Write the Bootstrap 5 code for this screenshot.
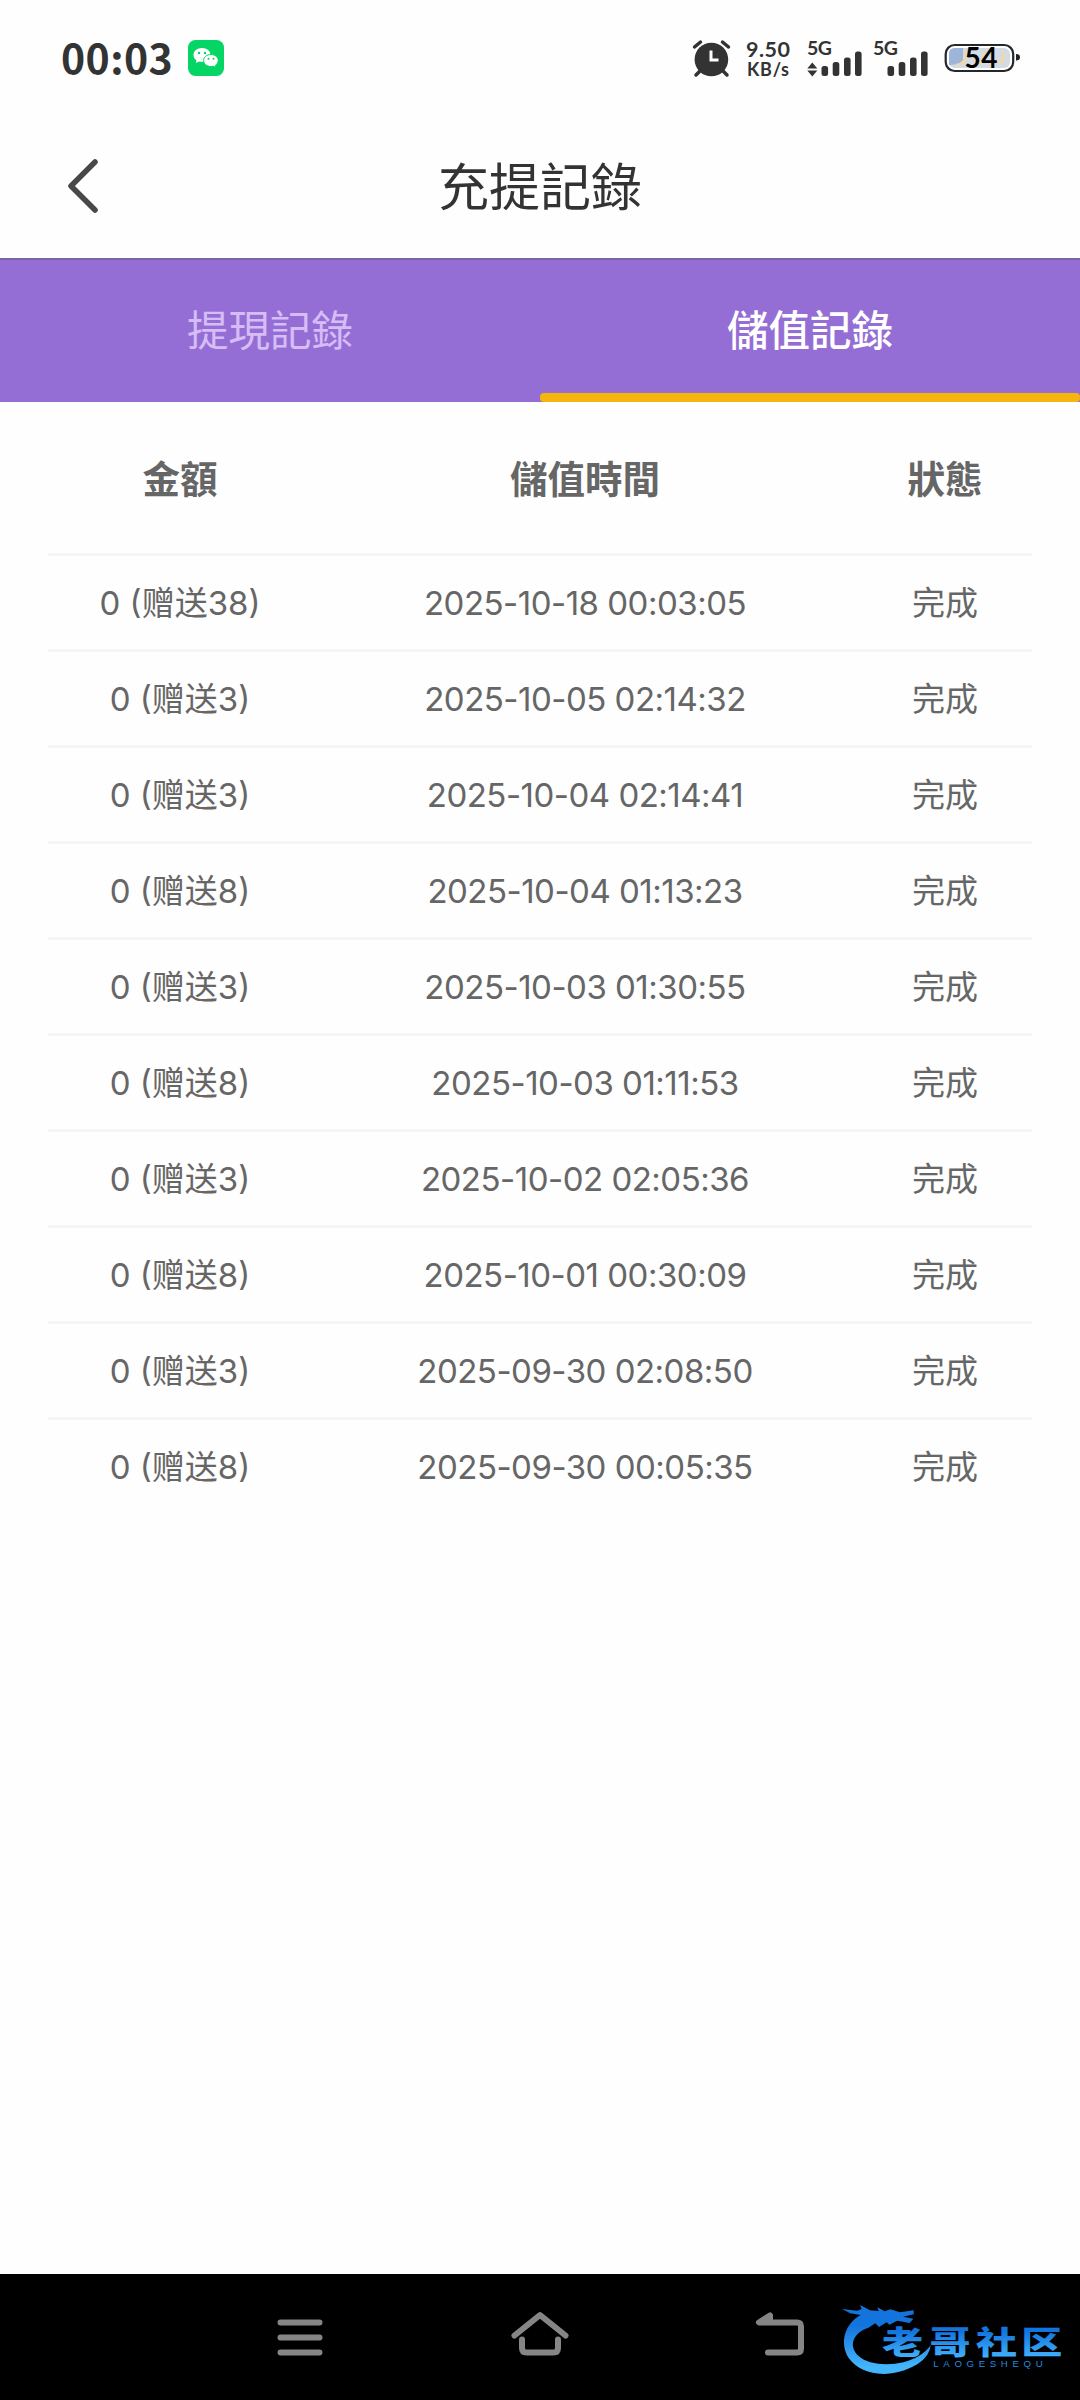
<!DOCTYPE html>
<html lang="zh-Hant">
<head>
  <meta charset="UTF-8" />
  <title>充提記錄</title>
  <meta name="viewport" content="width=device-width, initial-scale=1" />
  <link href="https://cdn.jsdelivr.net/npm/bootstrap@5.3.3/dist/css/bootstrap.min.css" rel="stylesheet" />
  <style>
    body { background:#fefefe; color:#333; height:2400px; overflow:hidden; font-family:Inter, "Noto Sans CJK SC", sans-serif; }
    .status-bar { height:116px; padding:0 60px 0 61px; }
    .clock { font:700 41px/1 "Noto Sans CJK SC", sans-serif; letter-spacing:.4px; width:127px; padding-bottom:4px; }
    .app-bar { height:142px; }
    .app-bar h1 { font:400 51px/1 "Noto Sans CJK TC", sans-serif; color:#333; padding-bottom:6px; }
    .back-btn { width:108px; padding:0 0 2px 64px; }
    .tab-bar { height:144px; background:#956ed5; border-top:2px solid #7b61a8; font-family:"Noto Sans CJK TC", sans-serif; }
    .tab-bar .nav-link { height:142px; padding:0 0 6px; border-radius:0; font-size:41.5px; color:#d6bdf5; }
    .tab-bar .nav-link.active { color:#fff; font-weight:500; position:relative; }
    .tab-bar .nav-link.active::after { content:""; position:absolute; left:0; right:0; bottom:0; height:9px; border-radius:4px; background:#f5b50c; }
    .records { margin:0 48px; color:#666; font-size:33px; }
    .record-row { display:grid; grid-template-columns:264px 546px 174px; height:96px; padding-top:3px; align-items:center; text-align:center; border-top:3px solid #f5f5f5; white-space:nowrap; }
    .record-time { letter-spacing:-.5px; }
    .record-head { height:151px; padding:0 0 2px; border:0; font:700 37.5px/1 "Noto Sans CJK TC", sans-serif; }
    .nav-keys { height:126px; background:#000; gap:180px; }
    .nav-icon { fill:none; stroke:#858585; stroke-width:6; stroke-linecap:round; stroke-linejoin:round; }
    .site-logo { right:0; top:0; }
    .status-icons { overflow:visible; }
    .status-icons text { font-family:Lato, sans-serif; font-weight:700; }
    .logo-name { font-family:"Noto Sans CJK SC", sans-serif; font-weight:900; }
    .logo-latin { font-family:"Liberation Sans", sans-serif; }
  </style>
</head>
<body class="d-flex flex-column">

  <header class="status-bar d-flex align-items-center">
    <span class="clock">00:03</span>
    <svg width="36" height="36" viewBox="0 0 36 36">
      <rect width="36" height="36" rx="7.5" fill="#05d564" />
      <path d="M14 8C9 8 5.500 11 5.500 15c0 2.300 1.100 4 2.900 5.300L8 23l3-1.600c1 .3 2 .4 3 .4 5 0 8.500-3 8.500-6.800S19 8 14 8z" fill="#fff" />
      <path d="M23 14.500c-4.300 0-7.400 2.600-7.400 6s3.100 6 7.400 6c.9 0 1.700-.1 2.500-.3L28 27.600l-.5-2.400c1.700-1.100 2.700-2.700 2.700-4.700 0-3.400-3-6-7.200-6z" fill="#fff" stroke="#05d564" />
      <g fill="#05d564"><circle cx="11" cy="13" r="1.200" /><circle cx="17" cy="13" r="1.200" /><circle cx="20.500" cy="18.800" r="1" /><circle cx="25.500" cy="18.800" r="1" /></g>
    </svg>

    <!-- alarm, speed, two 5G signals, battery -->
    <svg class="status-icons ms-auto" width="330" height="40" viewBox="690 38 330 40" fill="#333">
      <circle cx="711.400" cy="59.500" r="16.800" />
      <path d="M694.500 47l6-5M728.500 47l-6-5M700 71l-4 4M723 71l4 4" stroke="#333" stroke-width="3.500" stroke-linecap="round" />
      <path d="M711 50.500v9.500h7.500" fill="none" stroke="#fff" stroke-width="3" />
      <text x="746" y="56.500" font-size="21.500" textLength="44">9.50</text>
      <text x="747" y="76" font-size="18" textLength="42">KB/s</text>
      <text x="807" y="55" font-size="19.500" textLength="25">5G</text>
      <path d="M812.300 62.500l5 6h-10zM812.300 76.500l5-6h-10z" />
      <rect x="821.500" y="66" width="6.600" height="10" rx="2.500" />
      <rect x="832.700" y="62" width="6.600" height="14" rx="2.500" />
      <rect x="844" y="57.500" width="6.600" height="18.500" rx="2.500" />
      <rect x="855" y="51.500" width="6.600" height="24.500" rx="2.500" />
      <text x="873" y="55" font-size="19.500" textLength="25">5G</text>
      <rect x="887.500" y="66" width="6.600" height="10" rx="2.500" />
      <rect x="898.700" y="62" width="6.600" height="14" rx="2.500" />
      <rect x="910" y="57.500" width="6.600" height="18.500" rx="2.500" />
      <rect x="921" y="51.500" width="6.600" height="24.500" rx="2.500" />
      <rect x="945.700" y="45" width="67.500" height="26" rx="9" fill="#fff" stroke="#24272c" stroke-width="2.200" />
      <rect x="949" y="48" width="61" height="20" rx="6" fill="#d5dbe3" />
      <path d="M955 48h8v16l-14 1V54q0-6 6-6z" fill="#9db5d8" />
      <path d="M963 50c4 8-1 14-9 14 9 5 18-5 9-14zM981 50c4 8-1 14-9 14 9 5 18-5 9-14zM1001 50c4 8-1 12-6 13 9 4 14-6 6-13z" fill="#efd9ac" />
      <path d="M1016 54q4 0 4 3.200t-4 3.200z" fill="#222" />
      <text x="964.500" y="68" font-size="28" textLength="33" fill="#000">54</text>
    </svg>
  </header>

  <div class="app-bar d-flex align-items-center">
    <div class="back-btn">
      <svg width="36" height="54" viewBox="0 0 36 54" fill="none" stroke="#484848" stroke-width="5.500" stroke-linecap="round" stroke-linejoin="round"><path d="M31 3L7 27l24 24" /></svg>
    </div>
    <h1 class="flex-grow-1 text-center m-0">充提記錄</h1>
    <div class="back-btn"></div>
  </div>

  <nav class="tab-bar nav nav-fill flex-nowrap">
    <a class="nav-link w-50 d-flex align-items-center justify-content-center">提現記錄</a>
    <a class="nav-link w-50 active d-flex align-items-center justify-content-center">儲值記錄</a>
  </nav>

  <main class="records flex-grow-1">
    <div class="record-row record-head"><span>金額</span><span>儲值時間</span><span>狀態</span></div>
    <div id="rows" lang="zh-Hans"></div>
  </main>

  <footer class="nav-keys position-relative d-flex align-items-center justify-content-center">
    <svg class="nav-icon" width="60" height="60" viewBox="0 0 60 60"><path d="M10.500 15.500h39M10.500 30.500h39M10.500 45.500h39" /></svg>
    <svg class="nav-icon" width="60" height="60" viewBox="0 0 60 60"><path d="M4.500 28.500L30 8l25.500 20.500M12 32.500V41q0 4.500 4.500 4.500h27q4.500 0 4.500-4.500v-8.500" /></svg>
    <svg class="nav-icon" width="60" height="60" viewBox="0 0 60 60"><path d="M20 8.500L9 15.500h38q4 0 4 4v22q0 4-4 4H18" /><path d="M20 9v5h-8z" fill="#858585" /></svg>

    <svg class="site-logo position-absolute" width="260" height="126" viewBox="0 42 780 378" lang="zh-Hans">
      <defs>
        <linearGradient id="blue" x1="0" y1="0" x2="0" y2="1"><stop offset=".3" stop-color="#1474de" /><stop offset=".9" stop-color="#43b5fb" /></linearGradient>
      </defs>
      <path fill="url(#blue)" d="M66 147L112 152 125 147 120 135 150 151 176 153 172 142 194 154 211 148 240 157 281 151 281 163 249 170 280 176 269 189 232 182 208 194 200 187 177 201 166 190 145 203C98 219 84 258 116 288C153 322 244 320 296 288Q320 274 332 255Q330 288 292 313C210 360 123 346 86 294C58 249 73 192 122 165L91 160Z" />
      <g class="logo-name" fill="url(#blue)" transform="translate(0 282) scale(1.310 1)">
        <text x="142" y="0" font-size="94">老</text>
        <text x="251" y="0" font-size="94">哥</text>
        <text x="357" y="0" font-size="94">社</text>
        <text x="461" y="0" font-size="94">区</text>
      </g>
      <text class="logo-latin" x="340" y="320" fill="#238be0" font-size="29" textLength="328">LAOGESHEQU</text>
    </svg>
  </footer>

  <script src="https://cdn.jsdelivr.net/npm/bootstrap@5.3.3/dist/js/bootstrap.bundle.min.js"></script>
  <script>
    const records = [
      [38, "2025-10-18 00:03:05"],
      [3, "2025-10-05 02:14:32"],
      [3, "2025-10-04 02:14:41"],
      [8, "2025-10-04 01:13:23"],
      [3, "2025-10-03 01:30:55"],
      [8, "2025-10-03 01:11:53"],
      [3, "2025-10-02 02:05:36"],
      [8, "2025-10-01 00:30:09"],
      [3, "2025-09-30 02:08:50"],
      [8, "2025-09-30 00:05:35"]
    ];

    document.getElementById("rows").innerHTML = records.map(([bonus, time]) => `
      <div class="record-row"><span>0 (赠送${bonus})</span><span class="record-time">${time}</span><span>完成</span></div>
    `).join("");
  </script>
</body>
</html>
